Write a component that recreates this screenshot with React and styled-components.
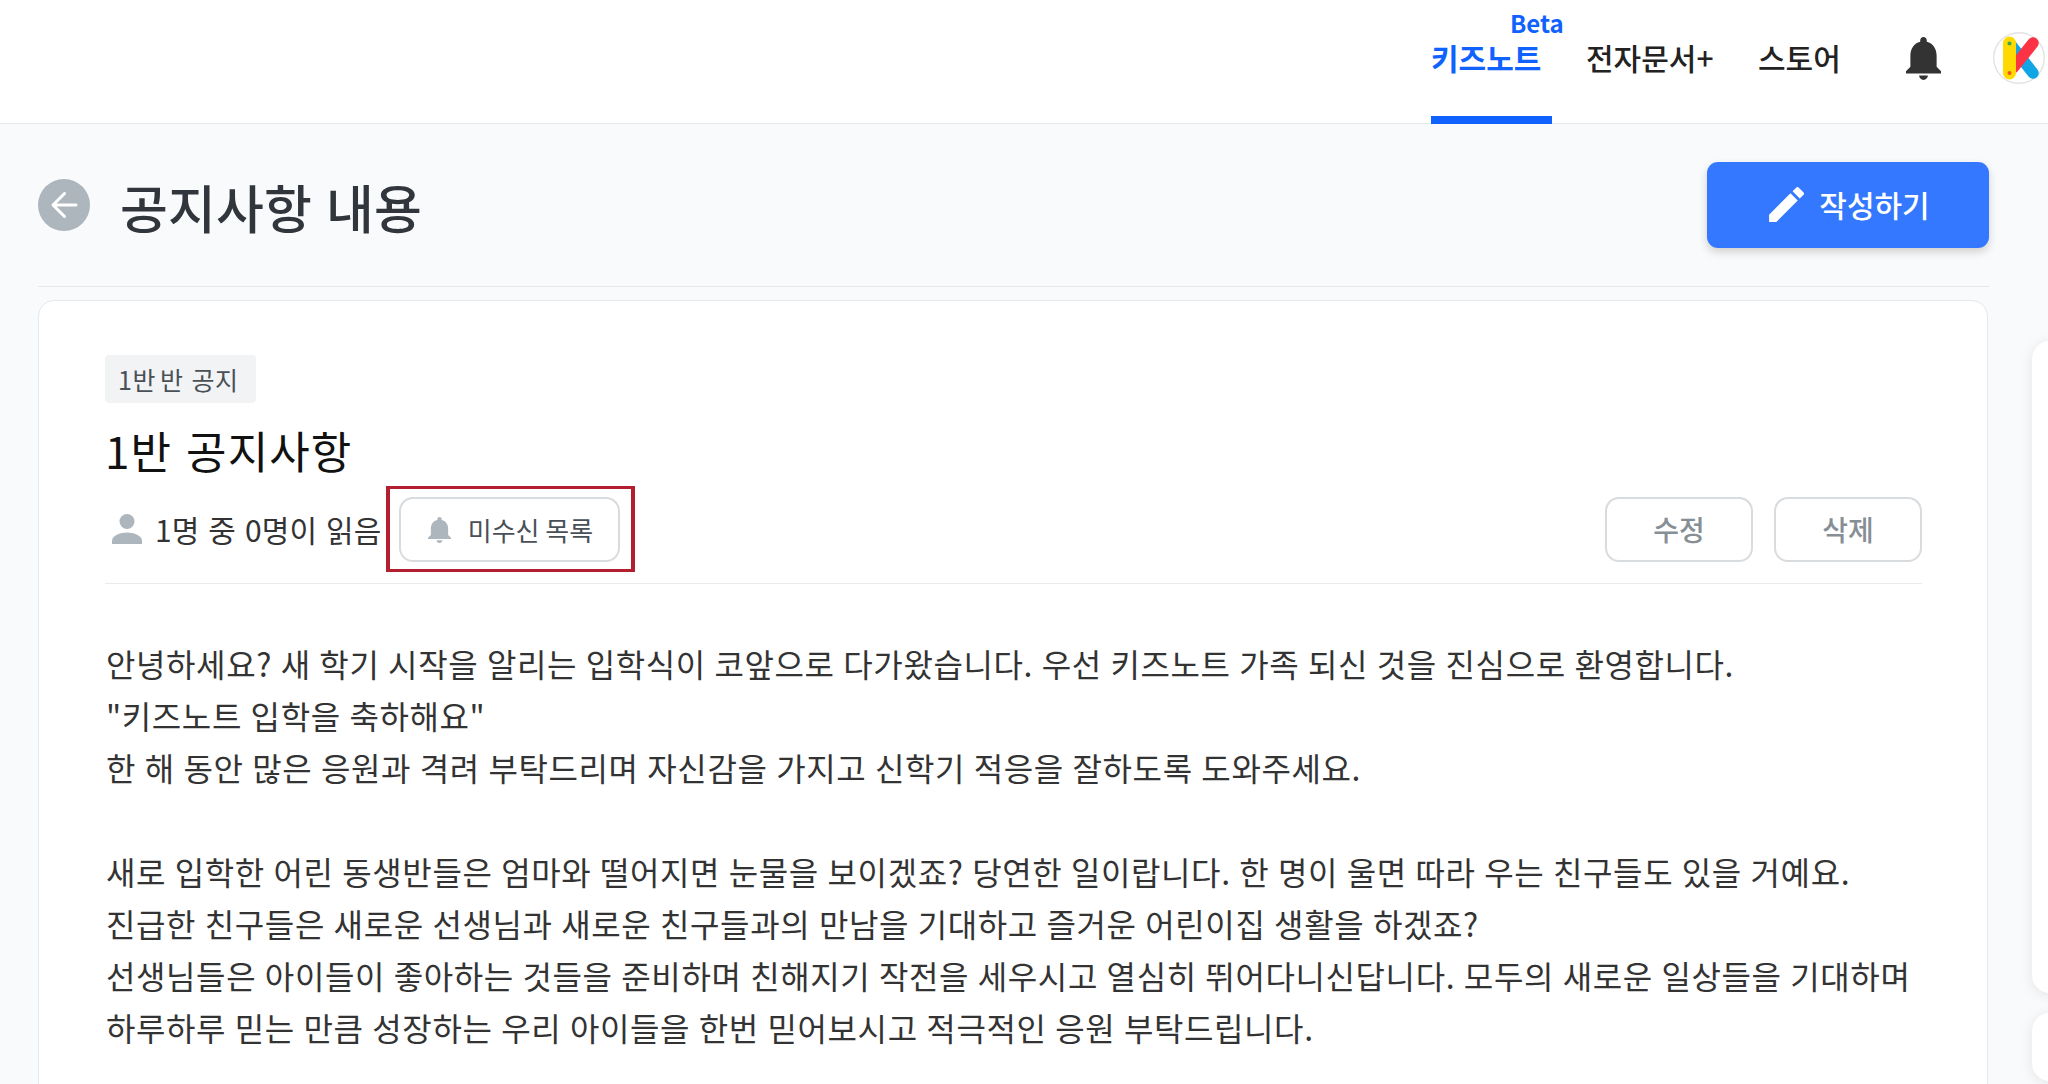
import styled, { createGlobalStyle } from "styled-components"

const GlobalStyle = createGlobalStyle`
  * {
    box-sizing: border-box;
  }

  body {
    margin: 0;
    background: #f8fafc;
    color: #333;
    font-family: "Noto Sans CJK KR", "Noto Sans", sans-serif;
  }
`

const Page = styled.div`
  width: 2048px;
  height: 1084px;
  overflow: hidden;
`

const Header = styled.header`
  display: flex;
  justify-content: flex-end;
  height: 124px;
  padding-right: 3px;
  background: #fff;
  border-bottom: 1px solid #e6e8eb;
`

const Nav = styled.nav`
  display: flex;
`

const Tab = styled.a`
  position: relative;
  width: ${p => p.$width}px;
  height: 124px;
  margin-right: ${p => p.$gap}px;
  padding-top: 36px;
  border-bottom: 8px solid ${p => (p.$active ? "#0f62fe" : "transparent")};
  color: ${p => (p.$active ? "#0f62fe" : "#222")};
  font-size: 30px;
  font-weight: ${p => (p.$active ? 700 : 500)};
  line-height: 42px;
  white-space: nowrap;
`

const Beta = styled.sup`
  position: absolute;
  top: 10px;
  left: 79px;
  font-size: 24px;
  font-weight: 700;
  line-height: 26px;
`

const HeaderIcon = styled.div`
  margin: 37px 52px 0 0;
`

const Avatar = styled.div`
  width: 52px;
  height: 52px;
  margin-top: 32px;
`

const Columns = styled.div`
  display: flex;
  gap: 43px;
  padding-left: 38px;
`

const Main = styled.main`
  flex: none;
  width: 1951px;
`

const TitleBar = styled.div`
  display: flex;
  align-items: center;
  height: 163px;
  border-bottom: 1px solid #e6e9ec;
`

const Back = styled.button`
  display: flex;
  align-items: center;
  justify-content: center;
  width: 52px;
  height: 52px;
  padding: 0;
  border: 0;
  border-radius: 50%;
  background: #adb5bd;
`

const PageTitle = styled.h1`
  flex: 1;
  margin: 4px 0 0 30px;
  color: #30363b;
  font-size: 52px;
  font-weight: 500;
  letter-spacing: 0.2px;
  word-spacing: 2px;
  line-height: 60px;
`

const WriteButton = styled.button`
  display: flex;
  align-items: center;
  justify-content: center;
  gap: 15px;
  width: 282px;
  height: 86px;
  padding: 0 0 2px 3px;
  border: 0;
  border-radius: 11px;
  background: #3478ff;
  box-shadow: 0 4px 8px rgba(60, 40, 20, 0.2);
  color: #fff;
  font-family: inherit;
  font-size: 30px;
  font-weight: 500;
  line-height: 40px;
`

const Card = styled.article`
  width: 1950px;
  height: 840px;
  margin-top: 13px;
  padding: 54px 65px 0 66px;
  border: 1px solid #e6e9ec;
  border-radius: 16px;
  background: #fff;
`

const Tag = styled.span`
  display: block;
  width: 151px;
  height: 48px;
  padding-left: 13px;
  border-radius: 4px;
  background: #f1f3f5;
  color: #495057;
  font-size: 25px;
  letter-spacing: 0.5px;
  word-spacing: 2px;
  line-height: 48px;
  white-space: nowrap;
`

const ClassName = styled.span`
  margin-right: 4px;
`

const NoticeTitle = styled.h2`
  margin: 17px 0 0;
  color: #111;
  font-size: 44px;
  font-weight: 400;
  letter-spacing: 1.1px;
  word-spacing: 3px;
  line-height: 60px;
`

const Meta = styled.div`
  display: flex;
  align-items: center;
  height: 104px;
  padding-bottom: 5px;
  border-bottom: 1px solid #e9ebed;
`

const ReadCount = styled.span`
  display: flex;
  align-items: center;
  gap: 13px;
  width: 281px;
  padding-left: 7px;
  color: #333;
  font-size: 30px;
  letter-spacing: 0.2px;
  word-spacing: 1.8px;
  line-height: 40px;
  white-space: nowrap;
`

const ReadText = styled.span`
  padding-bottom: 1px;
`

const Highlight = styled.div`
  display: flex;
  padding: 8px 11px 7px 9px;
  border: solid #b41f30;
  border-width: 3px 4px;
`

const OutlineButton = styled.button`
  display: flex;
  align-items: center;
  justify-content: center;
  gap: ${p => p.$gap || 0}px;
  width: ${p => p.$width || 148}px;
  height: 65px;
  padding: 0 0 0 ${p => p.$shift || 0}px;
  border: 2px solid #d9dcdf;
  border-radius: 14px;
  background: #fff;
  color: ${p => p.$color || "#868e96"};
  font-family: inherit;
  font-size: ${p => p.$size || 28}px;
  font-weight: ${p => p.$weight || 500};
`

const Actions = styled.div`
  display: flex;
  gap: 21px;
  margin-left: auto;
`

const Body = styled.div`
  margin-top: 53px;
  padding-left: 1px;
  color: #333;
  font-size: 32px;
  letter-spacing: 0.6px;
  word-spacing: 0.9px;
  line-height: 52px;
`

const Line = styled.p`
  min-height: 52px;
  margin: 0;
  white-space: nowrap;
`

const Side = styled.aside`
  display: flex;
  flex-direction: column;
  gap: 20px;
  margin-top: 217px;
`

const SideCard = styled.div`
  width: 300px;
  height: ${p => p.$height}px;
  border-radius: 18px;
  background: #fff;
  box-shadow: 0 2px 14px rgba(0, 0, 0, 0.09);
`

const lines = [
  "안녕하세요? 새 학기 시작을 알리는 입학식이 코앞으로 다가왔습니다. 우선 키즈노트 가족 되신 것을 진심으로 환영합니다.",
  "\"키즈노트 입학을 축하해요\"",
  "한 해 동안 많은 응원과 격려 부탁드리며 자신감을 가지고 신학기 적응을 잘하도록 도와주세요.",
  "",
  "새로 입학한 어린 동생반들은 엄마와 떨어지면 눈물을 보이겠죠? 당연한 일이랍니다. 한 명이 울면 따라 우는 친구들도 있을 거예요.",
  "진급한 친구들은 새로운 선생님과 새로운 친구들과의 만남을 기대하고 즐거운 어린이집 생활을 하겠죠?",
  "선생님들은 아이들이 좋아하는 것들을 준비하며 친해지기 작전을 세우시고 열심히 뛰어다니신답니다. 모두의 새로운 일상들을 기대하며",
  "하루하루 믿는 만큼 성장하는 우리 아이들을 한번 믿어보시고 적극적인 응원 부탁드립니다.",
]

function Bell({ width, height, fill }) {
  return (
    <svg width={width} height={height} viewBox="4 2.5 16 19.5" preserveAspectRatio="none" fill={fill} display="block">
      <path d="M12 22c1.1 0 2-.9 2-2h-4c0 1.1.9 2 2 2zm6-6v-5c0-3.07-1.63-5.64-4.5-6.32V4c0-.83-.67-1.5-1.5-1.5s-1.5.67-1.5 1.5v.68C7.64 5.36 6 7.92 6 11v5l-2 2v1h16v-1l-2-2z" />
    </svg>
  )
}

function Logo() {
  return (
    <svg width="52" height="52" viewBox="0 0 52 52" display="block">
      <circle cx="26" cy="26" r="25.3" fill="#fff" stroke="#e3e3e3" strokeWidth="1.4" />
      <g strokeLinecap="round" strokeWidth="11.5">
        <path d="M18 13L40 41" stroke="#12a5e6" />
        <path d="M40 11L20 36" stroke="#fb3345" />
        <path d="M16.5 11V41" stroke="#ffd900" strokeWidth="13" />
      </g>
      <circle cx="16.5" cy="11.5" r="2" fill="#35a853" />
      <circle cx="16.5" cy="41" r="2" fill="#f4511e" />
    </svg>
  )
}

function App() {
  return (
    <Page>
      <GlobalStyle />
      <Header>
        <Nav>
          <Tab $active $width={121} $gap={34}>키즈노트<Beta>Beta</Beta></Tab>
          <Tab $width={128} $gap={44}>전자문서+</Tab>
          <Tab $width={84} $gap={64}>스토어</Tab>
        </Nav>
        <HeaderIcon><Bell width={35} height={43} fill="#333" /></HeaderIcon>
        <Avatar><Logo /></Avatar>
      </Header>
      <Columns>
        <Main>
          <TitleBar>
            <Back>
              <svg width="27" height="26" viewBox="0 0 27 26" fill="none" stroke="#fff" strokeWidth="3" strokeLinecap="round" strokeLinejoin="round">
                <path d="M25 13H2M13.5 1.5L2 13l11.5 11.5" />
              </svg>
            </Back>
            <PageTitle>공지사항 내용</PageTitle>
            <WriteButton>
              <svg width="35" height="35" viewBox="3 2.9 18 18.1" fill="#fff">
                <path d="M3 17.25V21h3.75L17.81 9.94l-3.75-3.75L3 17.25zM20.71 7.04a1 1 0 0 0 0-1.41l-2.34-2.34a1 1 0 0 0-1.41 0l-1.83 1.83 3.75 3.75 1.83-1.83z" />
              </svg>
              작성하기
            </WriteButton>
          </TitleBar>
          <Card>
            <Tag><ClassName>1반</ClassName>반 공지</Tag>
            <NoticeTitle>1반 공지사항</NoticeTitle>
            <Meta>
              <ReadCount>
                <svg width="30" height="30" viewBox="0 0 30 30" fill="#adb5bd">
                  <circle cx="15" cy="7.5" r="7.5" />
                  <path d="M0 30v-3c0-5.5 8-8.5 15-8.5s15 3 15 8.5v3z" />
                </svg>
                <ReadText>1명 중 0명이 읽음</ReadText>
              </ReadCount>
              <Highlight>
                <OutlineButton $width={221} $gap={17} $shift={2} $size={26} $weight={400} $color="#495057">
                  <Bell width={23} height={26} fill="#adb5bd" />
                  미수신 목록
                </OutlineButton>
              </Highlight>
              <Actions>
                <OutlineButton>수정</OutlineButton>
                <OutlineButton>삭제</OutlineButton>
              </Actions>
            </Meta>
            <Body>
              {lines.map((line, i) => <Line key={i}>{line}</Line>)}
            </Body>
          </Card>
        </Main>
        <Side>
          <SideCard $height={652} />
          <SideCard $height={68} />
        </Side>
      </Columns>
    </Page>
  )
}

export default App
